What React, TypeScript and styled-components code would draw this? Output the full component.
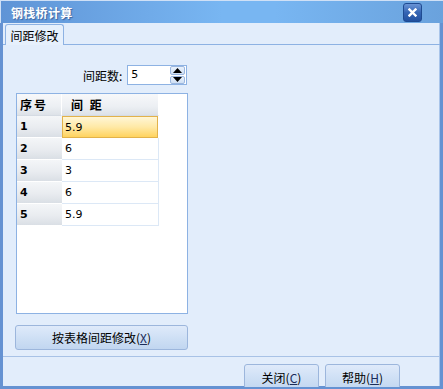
import React from "react";
import styled, { createGlobalStyle } from "styled-components";

const Global = createGlobalStyle`
  html, body { margin: 0; padding: 0; background: #e2edfb; }
  body { width: 443px; height: 389px; overflow: hidden; }
  * { box-sizing: border-box; }
`;

const CJK = `"Noto Sans CJK SC", "Noto Sans", sans-serif`;
const NUM = `"DejaVu Sans", "Noto Sans CJK SC", sans-serif`;

const Window = styled.div`
  width: 443px;
  height: 389px;
  display: flex;
  flex-direction: column;
  background: #e2edfb;
  font-family: ${CJK};
  font-size: 12px;
  color: #000;
  overflow: hidden;
`;

const TitleBar = styled.div`
  height: 23px;
  flex: none;
  display: flex;
  align-items: center;
  justify-content: space-between;
  padding: 0 21px 0 10px;
  border-top: 1px solid #cfe0f6;
  border-left: 1px solid #cfe0f6;
  background: linear-gradient(90deg, #5f94d6 0%, #78b6f2 50%, #78b6f2 62%, #6aa2dd 100%);
`;

const Title = styled.span`
  color: #fff;
  font-weight: bold;
  font-size: 12px;
  letter-spacing: 0.3px;
  text-shadow: 1px 1px 1px #3c64a0;
`;

const CloseBtn = styled.div`
  width: 19px;
  height: 19px;
  border-radius: 3px;
  border: 1px solid #1f4b92;
  background: linear-gradient(180deg, #6a94d6 0%, #3565b4 50%, #21509f 100%);
  display: flex;
  align-items: center;
  justify-content: center;
`;

const Body = styled.div`
  flex: 1;
  display: flex;
  flex-direction: column;
  border-left: 3px solid #6592d2;
  border-right: 3px solid #6592d2;
  border-bottom: 3px solid #6592d2;
  box-shadow: inset -1px 0 0 #a9c5ea;
  min-height: 0;
`;

const TabStrip = styled.div`
  height: 22px;
  flex: none;
  display: flex;
  align-items: flex-end;
  padding-left: 2px;
  border-bottom: 1px solid #8db2e3;
`;

const Tab = styled.div`
  height: 21px;
  width: 59px;
  margin-bottom: -1px;
  border: 1px solid #8db2e3;
  border-bottom: none;
  border-radius: 3px 3px 0 0;
  background: #e6f0fc;
  display: flex;
  align-items: center;
  justify-content: center;
  font-size: 12px;
`;

const Panel = styled.div`
  flex: 1;
  display: flex;
  flex-direction: column;
  padding: 20px 0 6px 13px;
  border-bottom: 1px solid #a8c2e6;
`;

const SpinRow = styled.div`
  display: flex;
  align-items: center;
  padding-left: 67px;
  gap: 5px;
  height: 20px;
`;

const Label = styled.span`
  font-size: 12px;
`;

const SpinBox = styled.div`
  width: 60px;
  height: 20px;
  border: 1px solid #8db2e3;
  background: #fff;
  display: flex;
  align-items: stretch;
`;

const SpinValue = styled.span`
  flex: 1;
  font-family: ${NUM};
  font-size: 11px;
  padding-left: 3px;
  line-height: 18px;
`;

const SpinButtons = styled.div`
  width: 16px;
  display: flex;
  flex-direction: column;
  gap: 1px;
  padding: 0 1px 0 0;
`;

const SpinBtn = styled.div`
  flex: 1;
  border: 1px solid #9bb7df;
  border-radius: 2px;
  background: linear-gradient(180deg, #eaf2fc, #cfdff3);
  display: flex;
  align-items: center;
  justify-content: center;
`;

const Grid = styled.div`
  margin-top: 8px;
  width: 172px;
  height: 221px;
  border: 1px solid #8db2e3;
  background: #fff;
  display: flex;
  flex-direction: column;
`;

const Row = styled.div`
  display: flex;
  height: 22px;
  width: 142px;
`;

const HeadCell = styled.div<{ $w: number; $pl: number }>`
  width: ${(p) => p.$w}px;
  height: 22px;
  padding-left: ${(p) => p.$pl}px;
  display: flex;
  align-items: center;
  font-weight: bold;
  font-size: 12px;
  letter-spacing: 2px;
  background: linear-gradient(180deg, #f7f8fa 0%, #eceff3 60%, #dde2e8 100%);
  border-right: 1px solid #ffffff;
  border-bottom: 1px solid #d5dbe3;
`;

const RowHead = styled.div`
  width: 45px;
  height: 22px;
  padding-left: 3px;
  display: flex;
  align-items: center;
  font-family: ${NUM};
  font-weight: bold;
  font-size: 11px;
  background: linear-gradient(180deg, #f4f6f8 0%, #e9ecf0 55%, #dadfe5 100%);
  border-bottom: 1px solid #ffffff;
`;

const Cell = styled.div<{ $sel?: boolean }>`
  width: 97px;
  height: 22px;
  padding-left: 3px;
  display: flex;
  align-items: center;
  font-family: ${NUM};
  font-size: 11px;
  border-right: 1px solid #dce8f6;
  border-bottom: 1px solid #dce8f6;
  ${(p) =>
    p.$sel
      ? `background: linear-gradient(180deg, #fff6d6 0%, #ffe9a6 50%, #ffd35e 100%);
         border: 1px solid #e2b24a; padding-left: 2px; width: 96px;`
      : ``}
`;

const ActionButton = styled.div<{ $w: number }>`
  width: ${(p) => p.$w}px;
  height: 25px;
  border: 1px solid #9cb6dc;
  border-radius: 3px;
  background: linear-gradient(180deg, #dfeafa 0%, #cfe0f5 50%, #c1d6f0 100%);
  display: flex;
  align-items: center;
  justify-content: center;
  font-size: 12px;
  flex: none;
`;

const MainButton = styled(ActionButton)`
  margin-top: 11px;
  margin-left: -1px;
`;

const U = styled.span`
  text-decoration: underline;
  color: #1a2c5a;
`;

const Footer = styled.div`
  height: 30px;
  flex: none;
  display: flex;
  justify-content: flex-end;
  align-items: flex-start;
  gap: 6px;
  padding: 7px 40px 0 0;
  overflow: hidden;
`;

const FooterButton = styled(ActionButton)`
  height: 27px;
`;

const Up = () => (
  <svg width="9" height="5" viewBox="0 0 9 5">
    <path d="M4.5 0 L9 5 L0 5 Z" fill="#000" />
  </svg>
);
const Down = () => (
  <svg width="9" height="5" viewBox="0 0 9 5">
    <path d="M0 0 L9 0 L4.5 5 Z" fill="#000" />
  </svg>
);

const rows = ["5.9", "6", "3", "6", "5.9"];

export default function App() {
  return (
    <>
      <Global />
      <Window>
        <TitleBar>
          <Title>钢栈桥计算</Title>
          <CloseBtn>
            <svg width="9" height="9" viewBox="0 0 9 9">
              <path d="M1.5 1.5 L7.5 7.5 M7.5 1.5 L1.5 7.5" stroke="#fff" strokeWidth="2.4" strokeLinecap="square" />
            </svg>
          </CloseBtn>
        </TitleBar>
        <Body>
          <TabStrip>
            <Tab>间距修改</Tab>
          </TabStrip>
          <Panel>
            <SpinRow>
              <Label>间距数:</Label>
              <SpinBox>
                <SpinValue>5</SpinValue>
                <SpinButtons>
                  <SpinBtn>
                    <Up />
                  </SpinBtn>
                  <SpinBtn>
                    <Down />
                  </SpinBtn>
                </SpinButtons>
              </SpinBox>
            </SpinRow>
            <Grid>
              <Row>
                <HeadCell $w={45} $pl={3}>序号</HeadCell>
                <HeadCell $w={97} $pl={9}>间 距</HeadCell>
              </Row>
              {rows.map((v, i) => (
                <Row key={i}>
                  <RowHead>{i + 1}</RowHead>
                  <Cell $sel={i === 0}>{v}</Cell>
                </Row>
              ))}
            </Grid>
            <MainButton $w={173}>
              按表格间距修改(<U>X</U>)
            </MainButton>
          </Panel>
          <Footer>
            <FooterButton $w={75}>
              关闭(<U>C</U>)
            </FooterButton>
            <FooterButton $w={75}>
              帮助(<U>H</U>)
            </FooterButton>
          </Footer>
        </Body>
      </Window>
    </>
  );
}
